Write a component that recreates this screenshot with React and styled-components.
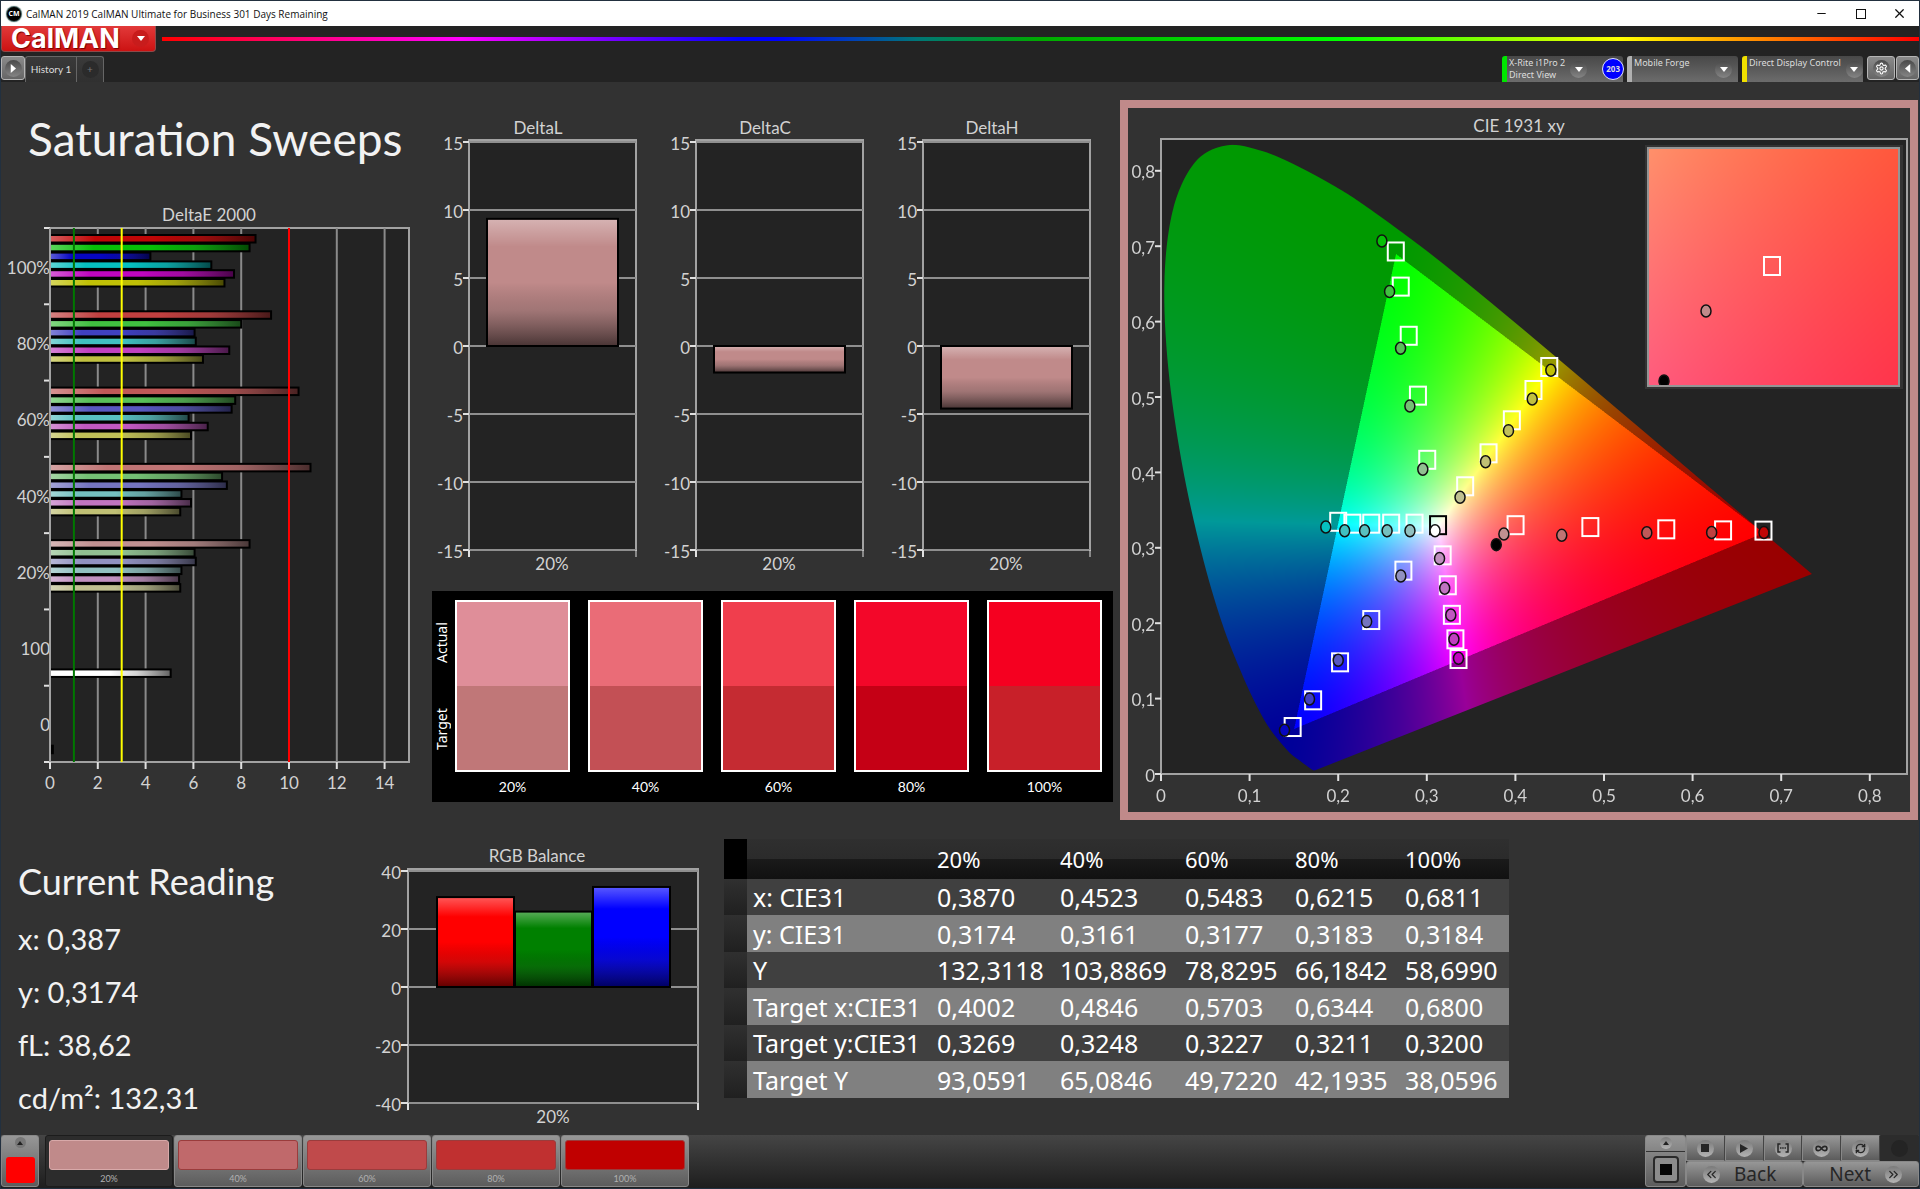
import React, { useLayoutEffect, useRef } from 'react';
import styled, { createGlobalStyle, css } from 'styled-components';
import { LuMinus, LuSquare, LuX, LuSettings, LuInfinity, LuRefreshCw, LuChevronsLeft, LuChevronsRight } from 'react-icons/lu';

const GlobalStyle = createGlobalStyle`
  *, *::before, *::after {
    box-sizing: border-box;
  }
  body {
    margin: 0;
    background: #323232;
    font-family: Lato, 'Noto Sans', sans-serif;
  }
  button {
    margin: 0;
    padding: 0;
    border: none;
    font-family: inherit;
    color: inherit;
    cursor: pointer;
  }
  svg {
    display: block;
  }
`;

const hues = [
  [1, 0, 0],
  [0, 1, 0],
  [0, 0, 1],
  [0, 1, 1],
  [1, 0, 1],
  [1, 1, 0],
];

const toneOf = (hue, low) => `rgb(${hue.map((on) => (on ? 192 : low)).join(',')})`;

const deltaE = [
  { label: '100%', low: 6, values: [8.6, 8.35, 4.2, 6.75, 7.7, 7.3] },
  { label: '80%', low: 64, values: [9.25, 8.0, 6.05, 6.1, 7.5, 6.4] },
  { label: '60%', low: 88, values: [10.4, 7.75, 7.6, 5.8, 6.6, 5.9] },
  { label: '40%', low: 116, values: [10.9, 7.2, 7.4, 5.5, 5.9, 5.45] },
  { label: '20%', low: 145, values: [8.35, 6.05, 6.1, 5.5, 5.4, 5.45] },
  { label: '100', white: 5.05 },
  { label: '0', black: 0.12 },
];

const deltas = [
  { title: 'DeltaL', value: 9.35 },
  { title: 'DeltaC', value: -1.95 },
  { title: 'DeltaH', value: -4.6 },
];

const swatches = [
  { label: '20%', actual: '#df8e99', target: '#c07778' },
  { label: '40%', actual: '#ea6c77', target: '#c35055' },
  { label: '60%', actual: '#f03e4d', target: '#c52b32' },
  { label: '80%', actual: '#f30729', target: '#c50015' },
  { label: '100%', actual: '#f50020', target: '#c82029' },
];

const readings = ['x: 0,387', 'y: 0,3174', 'fL: 38,62', 'cd/m²: 132,31'];

const balance = [
  { color: '#ff0000', value: 31 },
  { color: '#008000', value: 26 },
  { color: '#0000ff', value: 34.5 },
];

const levels = ['20%', '40%', '60%', '80%', '100%'];

const rows = [
  ['x: CIE31', '0,3870', '0,4523', '0,5483', '0,6215', '0,6811'],
  ['y: CIE31', '0,3174', '0,3161', '0,3177', '0,3183', '0,3184'],
  ['Y', '132,3118', '103,8869', '78,8295', '66,1842', '58,6990'],
  ['Target x:CIE31', '0,4002', '0,4846', '0,5703', '0,6344', '0,6800'],
  ['Target y:CIE31', '0,3269', '0,3248', '0,3227', '0,3211', '0,3200'],
  ['Target Y', '93,0591', '65,0846', '49,7220', '42,1935', '38,0596'],
];

const patches = [
  { label: '20%', color: '#c08a8a' },
  { label: '40%', color: '#c0696b' },
  { label: '60%', color: '#c04a4b' },
  { label: '80%', color: '#c03030' },
  { label: '100%', color: '#c00000' },
];

const locus = [
  [0.1741, 0.005], [0.1726, 0.0048], [0.1714, 0.0051], [0.1689, 0.0069], [0.1644, 0.0109],
  [0.1566, 0.0177], [0.144, 0.0297], [0.1241, 0.0578], [0.1096, 0.0868], [0.0913, 0.1327],
  [0.0687, 0.2007], [0.0454, 0.295], [0.0235, 0.4127], [0.0082, 0.5384], [0.0039, 0.6548],
  [0.0139, 0.7502], [0.0389, 0.812], [0.0743, 0.8338], [0.1142, 0.8262], [0.1547, 0.8059],
  [0.1929, 0.7816], [0.2296, 0.7543], [0.3016, 0.6923], [0.3731, 0.6245], [0.4441, 0.5547],
  [0.5125, 0.4866], [0.5752, 0.4242], [0.627, 0.3725], [0.6915, 0.3083], [0.7347, 0.2653],
];

// every sweep runs from 20% to 100%
const sweeps = [
  {
    hue: hues[1],
    target: [[0.3005, 0.4167], [0.29, 0.5018], [0.2796, 0.5812], [0.2706, 0.6464], [0.265, 0.693]],
    actual: [[0.2955, 0.4041], [0.2809, 0.4881], [0.2704, 0.5646], [0.258, 0.64], [0.2493, 0.707]],
  },
  {
    hue: hues[5],
    target: [[0.3433, 0.3816], [0.3697, 0.4253], [0.396, 0.4691], [0.4204, 0.5093], [0.4382, 0.5398]],
    actual: [[0.3375, 0.367], [0.3663, 0.414], [0.3922, 0.4554], [0.419, 0.4973], [0.44, 0.5354]],
  },
  {
    hue: hues[3],
    target: [[0.2862, 0.332], [0.2598, 0.332], [0.2373, 0.332], [0.216, 0.332], [0.2, 0.3345]],
    actual: [[0.281, 0.3225], [0.2552, 0.3225], [0.2298, 0.3225], [0.2073, 0.3225], [0.186, 0.3276]],
  },
  {
    hue: hues[0],
    target: [[0.4002, 0.33], [0.4846, 0.3275], [0.5703, 0.3245], [0.6344, 0.3231], [0.68, 0.3228]],
    actual: [[0.387, 0.3184], [0.4523, 0.3165], [0.5483, 0.32], [0.6215, 0.3203], [0.6805, 0.3203]],
  },
  {
    hue: hues[2],
    target: [[0.2736, 0.2697], [0.2373, 0.2042], [0.2021, 0.1481], [0.1717, 0.0977], [0.1486, 0.0623]],
    actual: [[0.2707, 0.2626], [0.2321, 0.2021], [0.2, 0.1508], [0.1676, 0.0995], [0.1394, 0.058]],
  },
  {
    hue: hues[4],
    target: [[0.3179, 0.29], [0.3237, 0.2503], [0.3283, 0.2111], [0.3323, 0.1786], [0.3358, 0.1525]],
    actual: [[0.3144, 0.2857], [0.3202, 0.2463], [0.3271, 0.2109], [0.3306, 0.1786], [0.3358, 0.1535]],
  },
];

const sweepLows = [145, 116, 88, 64, 6];

const StyledWindow = styled.div`
  display: flex;
  flex-direction: column;
  min-height: 100vh;
  border: 1px solid #22303f;
  background: #323232;
`;

const StyledTitleBar = styled.header`
  display: flex;
  align-items: center;
  height: 25px;
  padding-left: 6px;
  background: #fff;
  color: #111;
  font-family: 'Open Sans', sans-serif;
  font-size: 10px;
`;

const StyledAppIcon = styled.span`
  display: grid;
  place-items: center;
  width: 14px;
  height: 14px;
  margin-right: 5px;
  border-radius: 50%;
  background: #000;
  box-shadow: 0 0 1px 1px #355;
  color: #fff;
  font-size: 7px;
  font-weight: 700;
`;

const StyledWindowButtons = styled.div`
  display: flex;
  gap: 22px;
  margin-left: auto;
  padding-right: 11px;
`;

const StyledWindowButton = styled.button`
  display: grid;
  place-items: center;
  width: 17px;
  height: 20px;
  background: none;
`;

const StyledBrandRow = styled.div`
  display: flex;
  align-items: flex-start;
  gap: 6px;
  height: 30px;
  background: #232323;
`;

const StyledBrand = styled.button`
  display: flex;
  align-items: center;
  justify-content: space-between;
  width: 155px;
  height: 26px;
  padding: 0 6px 0 9px;
  border: 1px solid #8d4a4a;
  border-top: none;
  border-radius: 0 0 4px 4px;
  background: linear-gradient(#e23a3a, #cc1212);
  color: #fff;
  font-family: Inter, sans-serif;
  font-size: 27px;
  font-weight: 700;
  line-height: 24px;
  text-shadow: 1px 1px 1px #700;
`;

const StyledRainbow = styled.div`
  flex: 1;
  height: 4px;
  margin-top: 11px;
  background: linear-gradient(to right, #f00, #f0f 17%, #00f 33%, #00f 35%, #077 43%, #0a0 50%, #0f0 67%, #ff0 83%, #f00);
`;

const StyledTabRow = styled.div`
  display: flex;
  align-items: flex-start;
  height: 26px;
  background: #232323;
  color: #ddd;
`;

const StyledTab = styled.button`
  display: grid;
  place-items: center;
  width: ${({ $width }) => $width}px;
  height: 26px;
  padding-bottom: 1px;
  border: 1px solid #666;
  border-bottom: none;
  border-right-width: ${({ $last }) => ($last ? 1 : 0)}px;
  border-radius: ${({ $last }) => ($last ? '0 3px 0 0' : '3px 0 0 0')};
  background: linear-gradient(#3a3a3a, #303030);
  font-size: 10px;
`;

const StyledSquareButton = styled.button`
  display: grid;
  place-items: center;
  width: ${({ $width }) => $width}px;
  height: 24px;
  border: 1px solid #b5b5b5;
  border-radius: 3px;
  background: linear-gradient(#8a8a8a, #666);
`;

const StyledDisc = styled.span`
  display: grid;
  place-items: center;
  flex: none;
  width: ${({ $size }) => $size || 17}px;
  height: ${({ $size }) => $size || 17}px;
  border-radius: 50%;
  background: ${({ $fill }) => $fill || 'linear-gradient(#4a4a4a, #858585)'};
  color: ${({ $color }) => $color || '#fff'};
`;

const StyledDevices = styled.div`
  display: flex;
  gap: 1px;
  margin-left: auto;
`;

const StyledDevice = styled.button`
  display: flex;
  align-items: center;
  gap: 5px;
  width: ${({ $width }) => $width}px;
  height: 26px;
  margin-right: 3px;
  padding-right: ${({ $badge }) => ($badge ? 1 : 6)}px;
  border-left: 5px solid ${({ $color }) => $color};
  border-radius: 3px 3px 0 0;
  background: linear-gradient(#484848, #6c6c6c);
  font-family: 'Noto Sans', sans-serif;
  font-size: 9px;
  line-height: 12px;
  text-align: left;
`;

const StyledDeviceName = styled.span`
  flex: 1;
  align-self: flex-start;
  padding: 1px 0 0 2px;
  white-space: nowrap;
`;

const StyledBadge = styled.span`
  display: grid;
  place-items: center;
  flex: none;
  width: 22px;
  height: 22px;
  margin-left: 10px;
  border: 1px solid #dfe3ff;
  border-radius: 50%;
  background: #00f;
  font-size: 8px;
  font-weight: 700;
`;

const StyledMain = styled.main`
  flex: 1;
  padding-top: 18px;
`;

const StyledCharts = styled.div`
  display: grid;
  grid-template-columns: minmax(0, 423fr) minmax(0, 696fr) minmax(0, 799fr);
  align-items: start;
`;

const StyledHeading = styled.h1`
  margin: 9px 0 31px 27px;
  color: #f2f2f2;
  font-size: 46px;
  font-weight: 400;
  line-height: 60px;
  white-space: nowrap;
`;

const StyledChart = styled.svg`
  width: 100%;
  height: auto;
  fill: #d2d2d2;
  font-size: 17px;

  text {
    dominant-baseline: central;
  }
`;

const StyledDeltaRow = styled.div`
  display: grid;
  grid-template-columns: repeat(3, minmax(0, 1fr));
  padding: 10px 15px 0 0;
`;

const StyledSwatchPanel = styled.div`
  display: flex;
  margin: 11px 7px 0 8px;
  padding: 9px 11px 0 0;
  background: #000;
  color: #fff;
  font-size: 14px;
`;

const StyledSideLabels = styled.div`
  display: grid;
  grid-template-rows: 1fr 1fr;
  flex: none;
  width: 23px;
  height: 172px;
  font-family: 'Noto Sans', sans-serif;
`;

const StyledSideLabel = styled.span`
  writing-mode: vertical-rl;
  rotate: 180deg;
  line-height: 20px;
  text-align: center;
`;

const StyledSwatches = styled.div`
  display: grid;
  grid-template-columns: repeat(5, minmax(0, 1fr));
  flex: 1;
  gap: 18px;
`;

const StyledSwatch = styled.figure`
  margin: 0;
  text-align: center;
`;

const StyledSwatchColors = styled.div`
  height: 172px;
  border: 2px solid #fff;
  background: linear-gradient(${({ $actual, $target }) => `${$actual} 50%, ${$target} 50%`});
`;

const StyledSwatchLabel = styled.figcaption`
  line-height: 30px;
`;

const StyledCiePanel = styled.section`
  margin-right: 1px;
  border: 8px solid #c08a8a;
`;

const StyledCanvas = styled.canvas`
  display: block;
  width: 100%;
  height: 100%;
`;

const StyledNumbers = styled.div`
  display: grid;
  grid-template-columns: minmax(0, 371fr) minmax(0, 330fr) minmax(0, 1217fr);
  align-items: start;
  margin-top: 19px;
`;

const StyledReading = styled.section`
  padding: 11px 0 0 17px;
  color: #f2f2f2;
  font-size: 29px;
  line-height: 53px;
`;

const StyledReadingTitle = styled.h2`
  margin: 0;
  font-size: 36px;
  font-weight: 400;
  line-height: 62px;
`;

const StyledReadingLine = styled.p`
  margin: 0;
`;

const StyledTable = styled.table`
  width: 100%;
  max-width: 785px;
  margin-left: 22px;
  border-spacing: 0;
  table-layout: fixed;
  color: #fff;
  font-family: 'Noto Sans', sans-serif;
  font-size: 25px;
  text-align: left;
`;

const StyledCol = styled.col`
  width: ${({ $width }) => $width}px;
`;

const StyledHeadCell = styled.th`
  height: 40px;
  padding: 0 0 0 6px;
  background: linear-gradient(#2f2f2f, #2b2b2b 50%, #1a1a1a 50%, #111);
  font-size: 22px;
  font-weight: 400;
  line-height: 32px;
`;

const StyledStrip = styled.td`
  padding: 0;
  background: ${({ $head }) => ($head ? '#000' : 'linear-gradient(#303030, #202020)')};
`;

const rowCell = css`
  height: ${({ $light }) => ($light ? 37 : 36)}px;
  padding: 0 0 0 6px;
  background: ${({ $light }) => ($light ? '#808080' : '#404040')};
  font-weight: 400;
  line-height: 34px;
  white-space: nowrap;
`;

const StyledRowHead = styled.th`
  ${rowCell}
`;

const StyledCell = styled.td`
  ${rowCell}
`;

const StyledFooter = styled.footer`
  display: flex;
  justify-content: space-between;
  height: 53px;
  background: linear-gradient(#454545, #1e1e1e);
`;

const StyledPatches = styled.div`
  display: flex;
  gap: 1px;
`;

const steel = css`
  border: 1px solid #888;
  border-radius: 3px;
  background: linear-gradient(#979797, #5c5c5c);
`;

const StyledCurrent = styled.button`
  ${steel}
  display: flex;
  flex-direction: column;
  align-items: center;
  justify-content: space-between;
  width: 38px;
  height: 52px;
  margin-right: 5px;
  padding: 1px 0 3px;
`;

const StyledCurrentColor = styled.span`
  width: 29px;
  height: 26px;
  border-radius: 3px;
  background: #f00;
`;

const StyledPatch = styled.button`
  ${steel}
  width: 128px;
  height: 52px;
  padding: 4px 3px 0;
  color: #b0b0b0;
  font-size: 9px;
  line-height: 18px;
  ${({ $active }) =>
    $active &&
    css`
      border-color: #1c1c1c;
      background: #2c2c2c;
    `}
`;

const StyledPatchColor = styled.span`
  display: block;
  height: 30px;
  border: 1px solid ${({ $active }) => ($active ? '#d8a9a9' : '#9a3c3c')};
  border-radius: 3px;
  background: ${({ $color }) => $color};
`;

const StyledTransport = styled.div`
  display: grid;
  grid-template-columns: 41px 117px 116px;
  grid-template-rows: 26px 26px;
`;

const StyledLevelButton = styled.button`
  ${steel}
  grid-row: span 2;
  display: flex;
  flex-direction: column;
  align-items: center;
  justify-content: space-between;
  padding: 1px 0 3px;
  background: linear-gradient(#979797, #858585 15px, #333 15px, #333 16px, #858585 16px, #5c5c5c);
`;

const StyledSmallButtons = styled.div`
  grid-column: span 2;
  display: grid;
  grid-template-columns: repeat(6, 1fr);
`;

const StyledSmallButton = styled.button`
  ${steel}
  display: grid;
  place-items: center;
  border-radius: 1px;
  border-right-color: #444;
  ${({ disabled }) =>
    disabled &&
    css`
      border-color: #2c2c2c;
      background: #2c2c2c;
    `}
`;

const StyledStepButton = styled.button`
  ${steel}
  display: flex;
  align-items: center;
  justify-content: ${({ $end }) => ($end ? 'flex-end' : 'flex-start')};
  gap: 14px;
  padding: 0 16px;
  color: #262626;
  font-family: 'Noto Sans', sans-serif;
  font-size: 19px;
  line-height: 22px;
`;

const Triangle = ({ points, width = 8, height = 5, color = 'currentColor' }) => (
  <svg width={width} height={height} viewBox="0 0 8 8" preserveAspectRatio="none">
    <polygon points={points} fill={color} />
  </svg>
);

const Down = () => <Triangle points="0,0 8,0 4,8" />;
const Up = () => <Triangle points="0,8 8,8 4,0" width={6} height={4} color="#222" />;

const Gloss = ({ id, horizontal }) => (
  <linearGradient id={id} x1="0" y1="0" x2={horizontal ? 1 : 0} y2={horizontal ? 0 : 1}>
    <stop offset="0" stopColor="#fff" stopOpacity="0.35" />
    <stop offset="0.22" stopColor="#fff" stopOpacity="0" />
    <stop offset="0.5" stopColor="#000" stopOpacity="0" />
    <stop offset="0.72" stopColor="#222" stopOpacity="0.2" />
    <stop offset="1" stopColor="#000" stopOpacity="0.62" />
  </linearGradient>
);

const GlossBar = ({ x, y, width, height, color, gloss }) => (
  <g>
    <rect x={x} y={y} width={width} height={height} fill={color} />
    <rect x={x} y={y} width={width} height={height} fill={`url(#${gloss})`} stroke="#000" strokeWidth="2" />
  </g>
);

const DeltaEChart = () => {
  const left = 49;
  const top = 28;
  const bottom = 562;
  const step = (bottom - top) / 7;
  const toX = (value) => left + value * 23.9;

  return (
    <StyledChart viewBox="0 0 423 610" role="img" aria-label="DeltaE 2000">
      <defs>
        <Gloss id="glossRow" horizontal />
      </defs>
      <text x="208" y="14" textAnchor="middle">DeltaE 2000</text>
      <rect x={left} y={top} width="359" height={bottom - top} fill="#232323" stroke="#a2a2a2" strokeWidth="2" />
      {[2, 4, 6, 8, 10, 12, 14].map((value) => (
        <line key={value} x1={toX(value)} x2={toX(value)} y1={top} y2={bottom} stroke="#8a8a8a" strokeWidth="2" />
      ))}
      {[0, 2, 4, 6, 8, 10, 12, 14].map((value) => (
        <g key={value}>
          <line x1={toX(value)} x2={toX(value)} y1={bottom} y2={bottom + 7} stroke="#e0e0e0" strokeWidth="2" />
          <text x={toX(value)} y="582" textAnchor="middle">{value}</text>
        </g>
      ))}
      {[0, 1, 2, 3, 4, 5, 6, 7].map((index) => (
        <line key={index} x1="43" x2="49" y1={top + index * step} y2={top + index * step} stroke="#e0e0e0" strokeWidth="2" />
      ))}
      {deltaE.map(({ label, low, values, white, black }, index) => {
        const start = top + index * step + 7;
        return (
          <g key={label}>
            <text x="49" y={top + (index + 0.5) * step + 1} textAnchor="end">{label}</text>
            {values &&
              values.map((value, i) => (
                <GlossBar
                  key={hues[i].join('')}
                  x={left}
                  y={start + i * 8.8}
                  width={value * 23.9}
                  height={7.5}
                  color={toneOf(hues[i], low)}
                  gloss="glossRow"
                />
              ))}
            {white && <GlossBar x={left} y={start + 53} width={white * 23.9} height={7.5} color="#fff" gloss="glossRow" />}
            {black && <GlossBar x={left} y={start + 53} width={black * 23.9} height={7.5} color="#000" gloss="glossRow" />}
          </g>
        );
      })}
      <line x1={left} x2={left} y1={top} y2={bottom} stroke="#a2a2a2" strokeWidth="2" />
      <line x1={toX(1)} x2={toX(1)} y1={top} y2={bottom} stroke="#007800" strokeWidth="2" />
      <line x1={toX(3)} x2={toX(3)} y1={top} y2={bottom} stroke="#ff0" strokeWidth="2" />
      <line x1={toX(10)} x2={toX(10)} y1={top} y2={bottom} stroke="#f00" strokeWidth="2" />
    </StyledChart>
  );
};

const DeltaChart = ({ title, value }) => {
  const zero = 236;
  const size = Math.abs(value) * 13.6;

  return (
    <StyledChart viewBox="0 0 227 470" role="img" aria-label={title}>
      <defs>
        <Gloss id="glossColumn" />
      </defs>
      <text x="114" y="17" textAnchor="middle">{title}</text>
      <rect x="45" y="30" width="167" height="410" fill="#232323" stroke="#a2a2a2" strokeWidth="2" />
      {[15, 10, 5, 0, -5, -10, -15].map((tick) => (
        <g key={tick}>
          <line x1="45" x2="212" y1={zero - tick * 13.6} y2={zero - tick * 13.6} stroke="#8f8f8f" strokeWidth="2" />
          <line x1="39" x2="45" y1={zero - tick * 13.6} y2={zero - tick * 13.6} stroke="#e0e0e0" strokeWidth="2" />
          <text x="39" y={zero + 1 - tick * 13.6} textAnchor="end">{tick}</text>
        </g>
      ))}
      <line x1="45" x2="45" y1="440" y2="447" stroke="#e0e0e0" strokeWidth="2" />
      <line x1="212" x2="212" y1="440" y2="447" stroke="#e0e0e0" strokeWidth="1" />
      <GlossBar x={63} y={value > 0 ? zero - size : zero} width={131} height={size} color="#c08a8a" gloss="glossColumn" />
      <text x="128" y="453" textAnchor="middle">20%</text>
    </StyledChart>
  );
};

const BalanceChart = () => (
  <StyledChart viewBox="0 0 330 290" role="img" aria-label="RGB Balance">
    <text x="165" y="16" textAnchor="middle">RGB Balance</text>
    <rect x="36" y="30" width="290" height="234" fill="#232323" stroke="#a2a2a2" strokeWidth="2" />
    {[40, 20, 0, -20, -40].map((tick) => (
      <g key={tick}>
        <line x1="36" x2="326" y1={148 - tick * 2.9} y2={148 - tick * 2.9} stroke="#8f8f8f" strokeWidth="2" />
        <line x1="29" x2="36" y1={148 - tick * 2.9} y2={148 - tick * 2.9} stroke="#e0e0e0" strokeWidth="2" />
        <text x="29" y={149 - tick * 2.9} textAnchor="end">{tick}</text>
      </g>
    ))}
    <line x1="36" x2="36" y1="264" y2="271" stroke="#e0e0e0" strokeWidth="2" />
    <line x1="326" x2="326" y1="264" y2="271" stroke="#e0e0e0" strokeWidth="2" />
    {balance.map(({ color, value }, index) => (
      <GlossBar
        key={color}
        x={65 + index * 78}
        y={148 - value * 2.9}
        width={77}
        height={value * 2.9}
        color={color}
        gloss="glossColumn"
      />
    ))}
    <text x="181" y="277" textAnchor="middle">20%</text>
  </StyledChart>
);

// chromaticity to a display colour, at full brightness inside the P3 triangle
const colorAt = (x, y) => {
  const z = 1 - x - y;
  const raw = [
    2.4935 * x - 0.9314 * y - 0.4027 * z,
    -0.8295 * x + 1.7627 * y + 0.0236 * z,
    0.0358 * x - 0.0762 * y + 0.9569 * z,
  ];
  const max = Math.max(...raw);
  const light = Math.min(...raw) < 0 ? 153 : 255;
  return raw.map((c) => (c > 0 ? (c / max) ** 1.25 * light : 0));
};

const ColorField = ({ width, height, x0, x1, y0, y1, outline }) => {
  const ref = useRef(null);

  useLayoutEffect(() => {
    const canvas = ref.current;
    const ctx = canvas.getContext('2d');
    const image = ctx.createImageData(canvas.width, canvas.height);
    for (let row = 0; row < canvas.height; row += 1) {
      const y = y1 - ((y1 - y0) * row) / canvas.height;
      for (let col = 0; col < canvas.width; col += 1) {
        const x = x0 + ((x1 - x0) * col) / canvas.width;
        const [r, g, b] = colorAt(x, y);
        const at = (row * canvas.width + col) * 4;
        image.data[at] = r;
        image.data[at + 1] = g;
        image.data[at + 2] = b;
        image.data[at + 3] = 255;
      }
    }
    ctx.putImageData(image, 0, 0);
    if (outline) {
      const points = outline.map(([x, y]) => [
        ((x - x0) / (x1 - x0)) * canvas.width,
        ((y1 - y) / (y1 - y0)) * canvas.height,
      ]);
      const last = points.length - 1;
      ctx.globalCompositeOperation = 'destination-in';
      ctx.beginPath();
      ctx.moveTo(...points[0]);
      // smooth curve through every sample of the locus
      for (let i = 0; i < last; i += 1) {
        const before = points[Math.max(i - 1, 0)];
        const from = points[i];
        const to = points[i + 1];
        const after = points[Math.min(i + 2, last)];
        ctx.bezierCurveTo(
          from[0] + (to[0] - before[0]) / 6,
          from[1] + (to[1] - before[1]) / 6,
          to[0] - (after[0] - from[0]) / 6,
          to[1] - (after[1] - from[1]) / 6,
          to[0],
          to[1],
        );
      }
      ctx.closePath();
      ctx.fill();
    }
  }, [x0, x1, y0, y1, outline]);

  return <StyledCanvas ref={ref} width={width * 2} height={height * 2} />;
};

const Target = ({ x, y, color = '#fff' }) => (
  <rect x={x - 8} y={y - 9} width="16" height="18" fill="none" stroke={color} strokeWidth="2" />
);

const Measured = ({ x, y, color }) => (
  <ellipse cx={x} cy={y} rx="5" ry="6" fill={color} stroke="#111" strokeWidth="1.5" />
);

const CieChart = () => {
  const toX = (value) => 33 + value * 886;
  const toY = (value) => 666 - value * 754;

  return (
    <StyledChart viewBox="0 0 782 704" role="img" aria-label="CIE 1931 xy">
      <defs>
        <clipPath id="insetClip">
          <rect x="521" y="41" width="250" height="236" />
        </clipPath>
      </defs>
      <text x="391" y="17" textAnchor="middle">CIE 1931 xy</text>
      <rect x="33" y="31" width="746" height="635" fill="#232323" />
      <foreignObject x="33" y="31" width="744" height="635">
        <ColorField width={744} height={635} x0={0} x1={744 / 886} y0={0} y1={635 / 754} outline={locus} />
      </foreignObject>
      <rect x="33" y="31" width="746" height="635" fill="none" stroke="#a2a2a2" strokeWidth="2" />
      {[0, 1, 2, 3, 4, 5, 6, 7, 8].map((tick) => (
        <g key={tick}>
          <line x1={toX(tick / 10)} x2={toX(tick / 10)} y1="666" y2="673" stroke="#e0e0e0" strokeWidth="2" />
          <text x={toX(tick / 10)} y="687" textAnchor="middle">{tick ? `0,${tick}` : '0'}</text>
          <line x1="27" x2="33" y1={toY(tick / 10)} y2={toY(tick / 10)} stroke="#e0e0e0" strokeWidth="2" />
          <text x="27" y={toY(tick / 10) + 1} textAnchor="end">{tick ? `0,${tick}` : '0'}</text>
        </g>
      ))}
      {sweeps.map(({ hue, target }) =>
        target.map(([x, y]) => <Target key={`${hue}${x}`} x={toX(x)} y={toY(y)} />),
      )}
      <Target x={toX(0.3127)} y={toY(0.33)} color="#000" />
      {sweeps.map(({ hue, actual }) =>
        actual.map(([x, y], index) => (
          <Measured key={`${hue}${x}`} x={toX(x)} y={toY(y)} color={toneOf(hue, sweepLows[index])} />
        )),
      )}
      <Measured x={toX(0.3093)} y={toY(0.3225)} color="#fff" />
      <Measured x={toX(0.3784)} y={toY(0.3042)} color="#000" />
      <rect x="517" y="37" width="258" height="244" fill="#333" />
      <foreignObject x="520" y="40" width="251" height="238">
        <ColorField width={251} height={238} x0={0.375} x1={0.425} y0={0.303} y1={0.352} />
      </foreignObject>
      <rect x="520" y="40" width="251" height="238" fill="none" stroke="#959595" strokeWidth="2" />
      <Target x={644} y={158} />
      <Measured x={578} y={203} color="#c08a8a" />
      <g clipPath="url(#insetClip)">
        <Measured x={536} y={273} color="#000" />
      </g>
    </StyledChart>
  );
};

const Device = ({ name, color, width, badge }) => (
  <StyledDevice $color={color} $width={width} $badge={badge}>
    <StyledDeviceName>
      {name.map((line) => (
        <div key={line}>{line}</div>
      ))}
    </StyledDeviceName>
    <StyledDisc>
      <Down />
    </StyledDisc>
    {badge && <StyledBadge>{badge}</StyledBadge>}
  </StyledDevice>
);

const silver = 'linear-gradient(#7a7a7a, #b4b4b4)';

const App = () => (
  <StyledWindow>
    <GlobalStyle />
    <StyledTitleBar>
      <StyledAppIcon>CM</StyledAppIcon>
      CalMAN 2019 CalMAN Ultimate for Business 301 Days Remaining
      <StyledWindowButtons>
        <StyledWindowButton aria-label="Minimize"><LuMinus size={13} strokeWidth={2} /></StyledWindowButton>
        <StyledWindowButton aria-label="Maximize">
          <svg width="10" height="10" viewBox="0 0 10 10" fill="none" stroke="currentColor">
            <rect x="0.5" y="0.5" width="9" height="9" />
          </svg>
        </StyledWindowButton>
        <StyledWindowButton aria-label="Close"><LuX size={15} strokeWidth={2} /></StyledWindowButton>
      </StyledWindowButtons>
    </StyledTitleBar>

    <StyledBrandRow>
      <StyledBrand>
        CalMAN
        <StyledDisc $fill="#c81c1c"><Down /></StyledDisc>
      </StyledBrand>
      <StyledRainbow />
    </StyledBrandRow>

    <StyledTabRow>
      <StyledSquareButton $width={24} aria-label="Expand">
        <StyledDisc><Triangle points="1,0 8,4 1,8" width={6} height={9} /></StyledDisc>
      </StyledSquareButton>
      <StyledTab $width={51}>History 1</StyledTab>
      <StyledTab $width={28} $last aria-label="Add tab">
        <StyledDisc $fill="#2b2b2b" $color="#777">+</StyledDisc>
      </StyledTab>
      <StyledDevices>
        <Device name={['X-Rite i1Pro 2', 'Direct View']} color="#00e600" width={121} badge="203" />
        <Device name={['Mobile Forge']} color="#b0b0b0" width={111} />
        <Device name={['Direct Display Control']} color="#f0e000" width={121} />
        <StyledSquareButton $width={28} aria-label="Settings">
          <StyledDisc><LuSettings size={13} /></StyledDisc>
        </StyledSquareButton>
        <StyledSquareButton $width={23} aria-label="Collapse">
          <StyledDisc><Triangle points="7,0 0,4 7,8" width={6} height={9} /></StyledDisc>
        </StyledSquareButton>
      </StyledDevices>
    </StyledTabRow>

    <StyledMain>
      <StyledCharts>
        <section>
          <StyledHeading>Saturation Sweeps</StyledHeading>
          <DeltaEChart />
        </section>
        <section>
          <StyledDeltaRow>
            {deltas.map((item) => (
              <DeltaChart key={item.title} {...item} />
            ))}
          </StyledDeltaRow>
          <StyledSwatchPanel>
            <StyledSideLabels>
              <StyledSideLabel>Actual</StyledSideLabel>
              <StyledSideLabel>Target</StyledSideLabel>
            </StyledSideLabels>
            <StyledSwatches>
              {swatches.map(({ label, actual, target }) => (
                <StyledSwatch key={label}>
                  <StyledSwatchColors $actual={actual} $target={target} />
                  <StyledSwatchLabel>{label}</StyledSwatchLabel>
                </StyledSwatch>
              ))}
            </StyledSwatches>
          </StyledSwatchPanel>
        </section>
        <StyledCiePanel>
          <CieChart />
        </StyledCiePanel>
      </StyledCharts>

      <StyledNumbers>
        <StyledReading>
          <StyledReadingTitle>Current Reading</StyledReadingTitle>
          {readings.map((line) => (
            <StyledReadingLine key={line}>{line}</StyledReadingLine>
          ))}
        </StyledReading>
        <BalanceChart />
        <StyledTable>
          <colgroup>
            {[23, 184, 123, 125, 110, 110, 110].map((width, index) => (
              <StyledCol key={index} $width={width} />
            ))}
          </colgroup>
          <thead>
            <tr>
              <StyledStrip $head />
              <StyledHeadCell />
              {levels.map((level) => (
                <StyledHeadCell key={level} scope="col">{level}</StyledHeadCell>
              ))}
            </tr>
          </thead>
          <tbody>
            {rows.map(([name, ...cells], index) => (
              <tr key={name}>
                <StyledStrip />
                <StyledRowHead scope="row" $light={index % 2 === 1}>{name}</StyledRowHead>
                {cells.map((cell) => (
                  <StyledCell key={cell} $light={index % 2 === 1}>{cell}</StyledCell>
                ))}
              </tr>
            ))}
          </tbody>
        </StyledTable>
      </StyledNumbers>
    </StyledMain>

    <StyledFooter>
      <StyledPatches>
        <StyledCurrent aria-label="Current color">
          <StyledDisc $size={11} $fill="#777"><Up /></StyledDisc>
          <StyledCurrentColor />
        </StyledCurrent>
        {patches.map(({ label, color }, index) => (
          <StyledPatch key={label} $active={index === 0}>
            <StyledPatchColor $color={color} $active={index === 0} />
            {label}
          </StyledPatch>
        ))}
      </StyledPatches>
      <StyledTransport>
        <StyledLevelButton aria-label="Pattern window">
          <StyledDisc $size={12} $fill={silver}><Up /></StyledDisc>
          <svg width="26" height="27" viewBox="0 0 26 27">
            <rect x="1" y="1" width="24" height="25" rx="3" fill="#8c8c8c" stroke="#2a2a2a" strokeWidth="2" />
            <rect x="7" y="8" width="12" height="11" fill="#050505" />
          </svg>
        </StyledLevelButton>
        <StyledSmallButtons>
          <StyledSmallButton aria-label="Stop">
            <StyledDisc $fill={silver} $color="#262626"><Triangle points="0,0 8,0 8,8 0,8" width={8} height={8} /></StyledDisc>
          </StyledSmallButton>
          <StyledSmallButton aria-label="Play">
            <StyledDisc $fill={silver} $color="#262626"><Triangle points="0,0 8,4 0,8" width={8} height={9} /></StyledDisc>
          </StyledSmallButton>
          <StyledSmallButton aria-label="Range">
            <StyledDisc $fill={silver} $color="#262626">
              <svg width="12" height="10" viewBox="0 0 12 10" fill="none" stroke="currentColor" strokeWidth="1.5">
                <path d="M3.5 1H1v8h2.5M8.5 1H11v8H8.5" />
                <path d="M3 5h1.5M5.2 5h1.5M7.5 5H9" />
              </svg>
            </StyledDisc>
          </StyledSmallButton>
          <StyledSmallButton aria-label="Loop">
            <StyledDisc $fill={silver} $color="#262626"><LuInfinity size={13} strokeWidth={3} /></StyledDisc>
          </StyledSmallButton>
          <StyledSmallButton aria-label="Refresh">
            <StyledDisc $fill={silver} $color="#262626"><LuRefreshCw size={11} strokeWidth={3} /></StyledDisc>
          </StyledSmallButton>
          <StyledSmallButton aria-label="Record" disabled>
            <StyledDisc $fill="#242424" />
          </StyledSmallButton>
        </StyledSmallButtons>
        <StyledStepButton>
          <StyledDisc $fill={silver} $color="#262626"><LuChevronsLeft size={15} /></StyledDisc>
          Back
        </StyledStepButton>
        <StyledStepButton $end>
          Next
          <StyledDisc $fill={silver} $color="#262626"><LuChevronsRight size={15} /></StyledDisc>
        </StyledStepButton>
      </StyledTransport>
    </StyledFooter>
  </StyledWindow>
);

export default App;
